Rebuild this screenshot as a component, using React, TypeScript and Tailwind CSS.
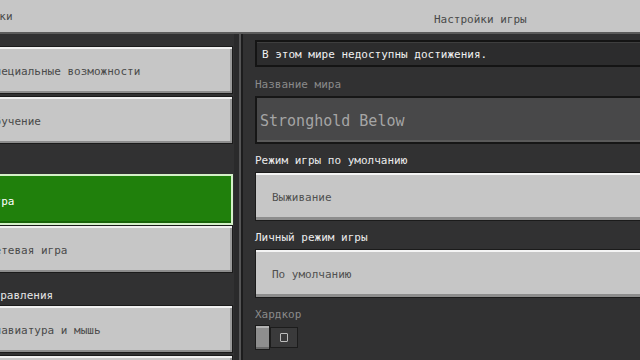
import React from "react";

const font = "font-['DejaVu_Sans_Mono','Liberation_Mono',monospace]";

function LeftButton({ label, active = false }: { label: string; active?: boolean }) {
  if (active) {
    return (
      <div className="h-[51px] border-2 border-[#d4f0c8] bg-[#20800c] flex items-center shadow-[inset_0_-2px_0_#176308]">
        <span className="ml-[16px] pt-[5px] text-[11px] text-white whitespace-nowrap">{label}</span>
      </div>
    );
  }
  return (
    <div className="h-[48px] border border-[#1b1b1b] bg-[#c6c6c6] flex items-center shadow-[inset_0_2px_0_#f0f0f0,inset_0_-2px_0_#8d8d8d,inset_-2px_0_0_#9a9a9a]">
      <span className="ml-[17px] pt-[4px] text-[11px] text-[#4a4a4a] whitespace-nowrap">{label}</span>
    </div>
  );
}

function Dropdown({ value }: { value: string }) {
  return (
    <div className="h-[49px] border border-[#1b1b1b] bg-[#c6c6c6] flex items-center pl-[16px] shadow-[inset_0_2px_0_#f4f4f4,inset_0_-3px_0_#8d8d8d]">
      <span className="pt-[4px] text-[11px] text-[#505050]">{value}</span>
    </div>
  );
}

export default function App() {
  return (
    <div className={`w-[640px] h-[360px] overflow-hidden bg-[#313132] ${font}`}>
      {/* шапка */}
      <div className="h-[34px] bg-[#c6c6c6] border-b-2 border-[#5c5c5c] flex items-center pt-[3px]">
        <div className="w-[241px] overflow-hidden">
          <span className="block ml-[-47px] text-[11px] text-[#4a4a4a] whitespace-nowrap">Настройки</span>
        </div>
        <div className="flex-1 pl-[193px]">
          <span className="text-[11px] text-[#4a4a4a]">Настройки игры</span>
        </div>
      </div>

      <div className="flex h-[326px]">
        {/* левая колонка */}
        <div className="w-[241px] overflow-hidden pr-[6px] border-r-2 border-[#555556] shadow-[inset_-5px_0_0_#2a2a2b]">
          <div className="flex flex-col pt-[12px] ml-[-30px]">
            <LeftButton label="Специальные возможности" />
            <div className="h-[2px]" />
            <LeftButton label="Обучение" />
            <div className="h-[30px]" />
            <LeftButton label="Игра" active />
            <LeftButton label="Сетевая игра" />
            <div className="h-[32px] flex items-end pb-[1px]">
              <span className="ml-[17px] text-[11px] text-[#e6e6e6] whitespace-nowrap">Управления</span>
            </div>
            <LeftButton label="Клавиатура и мышь" />
            <div className="h-[2px]" />
            <LeftButton label="Контроллер" />
          </div>
        </div>

        {/* правая колонка */}
        <div className="flex-1 border-l-2 border-[#1c1c1d] pl-[12px] mr-[-10px] flex flex-col">
          <div className="mt-[6px] h-[27px] border-2 border-[#141414] bg-[#2c2c2d] flex items-center pl-[5px] pt-[3px] shadow-[inset_0_1px_0_#3e3e3e]">
            <span className="text-[11px] text-[#f0f0f0]">В этом мире недоступны достижения.</span>
          </div>

          <div className="h-[29px] pt-[7px] flex items-center">
            <span className="text-[11px] text-[#8a8a8a]">Название мира</span>
          </div>
          <div className="h-[48px] border-2 border-[#161616] bg-[#484849] flex items-center pl-[3px] pt-[2px] shadow-[inset_0_-2px_0_#5a5a5a]">
            <span className="text-[15px] text-[#a5a5a5]">Stronghold Below</span>
          </div>

          <div className="h-[28px] flex items-center pt-[6px]">
            <span className="text-[11px] text-[#ececec]">Режим игры по умолчанию</span>
          </div>
          <Dropdown value="Выживание" />

          <div className="h-[28px] flex items-center pt-[6px]">
            <span className="text-[11px] text-[#ececec]">Личный режим игры</span>
          </div>
          <Dropdown value="По умолчанию" />

          <div className="h-[28px] flex items-center pt-[6px]">
            <span className="text-[11px] text-[#8a8a8a]">Хардкор</span>
          </div>
          <div className="flex items-center h-[25px] mt-[-1px]">
            <div className="w-[15px] h-[25px] border border-[#1b1b1b] bg-[#8e8e8e] shadow-[inset_0_2px_0_#b4b4b4,inset_0_-2px_0_#6a6a6a]" />
            <div className="w-[28px] h-[21px] bg-[#3a3a3b] border border-[#1c1c1c] flex items-center justify-center">
              <div className="w-[8px] h-[9px] border-[1.5px] border-[#bdbdbd] rounded-[1px]" />
            </div>
          </div>
        </div>
      </div>
    </div>
  );
}
